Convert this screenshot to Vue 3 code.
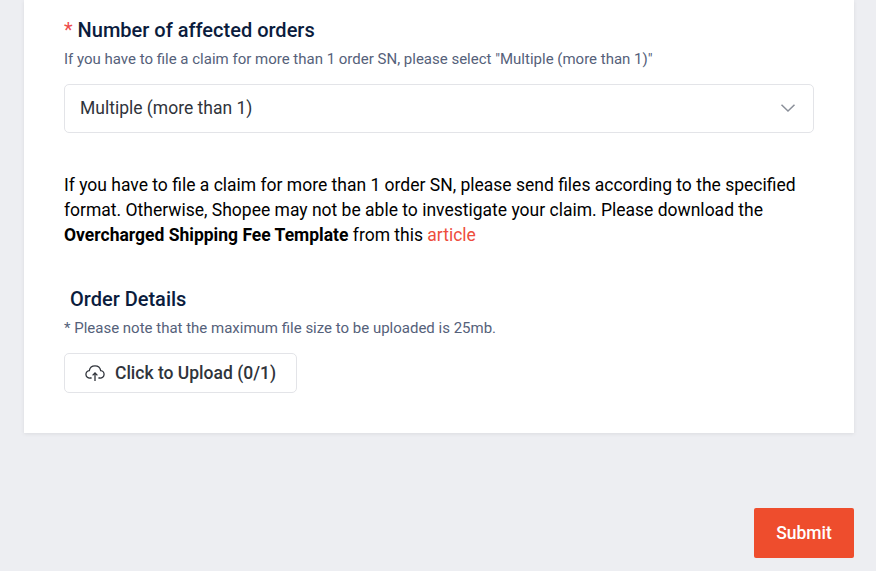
<template>
  <div class="page">
    <div class="card">
      <div class="field-title"><span class="required">*</span> Number of affected orders</div>
      <p class="hint">If you have to file a claim for more than 1 order SN, please select "Multiple (more than 1)"</p>
      <div class="select">
        <span>Multiple (more than 1)</span>
        <svg class="chevron" width="16" height="16" viewBox="0 0 16 16" fill="none">
          <path d="M1.5 4.8 8 11l6.5-6.2" stroke="#8a8f99" stroke-width="1.5" />
        </svg>
      </div>
      <p class="notice">
        If you have to file a claim for more than 1 order SN, please send files according to the specified format. Otherwise, Shopee may not be able to investigate your claim. Please download the
        <b>Overcharged Shipping Fee Template</b> from this <a class="link">article</a>
      </p>
      <div class="sub-title">Order Details</div>
      <p class="hint note">* Please note that the maximum file size to be uploaded is 25mb.</p>
      <button class="upload">
        <svg width="20" height="20" viewBox="0 0 20 20" fill="none" stroke="#30343b" stroke-width="1.3">
          <path d="M6.6 15H5A3.7 3.7 0 0 1 4.3 7.6 5.8 5.8 0 0 1 15.7 7.6 3.7 3.7 0 0 1 15 15H13.4" />
          <path d="M10 18V10M7.6 12.4 10 9.9l2.4 2.5" />
        </svg>
        <span>Click to Upload (0/1)</span>
      </button>
    </div>
    <div class="footer">
      <button class="submit">Submit</button>
    </div>
  </div>
</template>

<script setup>
</script>

<style>
html, body {
  margin: 0;
  background: #edeef2;
}
</style>

<style scoped>
.page {
  height: 571px;
  padding: 0 22px 0 24px;
  box-sizing: border-box;
  overflow: hidden;
  font-family: Roboto, "Liberation Sans", sans-serif;
}

.card {
  background: #fff;
  height: 433px;
  box-sizing: border-box;
  padding: 18px 40px 0;
  box-shadow: 0 1px 4px rgba(0, 0, 0, 0.08);
}

.field-title {
  font-size: 20px;
  line-height: 24px;
  font-weight: 500;
  color: #0b1c3d;
}

.required {
  color: #ee4d4d;
  font-weight: 400;
}

.hint {
  margin: 7px 0 0;
  font-size: 15px;
  line-height: 20px;
  color: #55617a;
}

.select {
  margin-top: 15px;
  height: 49px;
  box-sizing: border-box;
  border: 1px solid #e3e4e8;
  border-radius: 5px;
  padding: 0 17px 1px 15px;
  display: flex;
  align-items: center;
  justify-content: space-between;
  font-size: 17.5px;
  color: #30343b;
}

.notice {
  margin: 40px 0 0;
  font-size: 17.5px;
  line-height: 25px;
  color: #000;
}

.notice b {
  font-weight: 700;
}

.link {
  color: #ee4d3d;
}

.sub-title {
  margin: 39px 0 0 6px;
  font-size: 20px;
  line-height: 24px;
  font-weight: 500;
  color: #0b1c3d;
}

.note {
  margin-top: 7px;
}

.upload {
  margin-top: 15px;
  width: 233px;
  height: 40px;
  display: flex;
  align-items: center;
  justify-content: center;
  gap: 10px;
  background: #fff;
  border: 1px solid #e3e4e8;
  border-radius: 5px;
  font-family: inherit;
  font-size: 17.5px;
  font-weight: 500;
  color: #30343b;
}

.footer {
  display: flex;
  justify-content: flex-end;
  margin-top: 75px;
}

.submit {
  width: 100px;
  height: 50px;
  background: #ee4d2d;
  color: #fff;
  border: none;
  border-radius: 2px;
  font-family: inherit;
  font-size: 17.5px;
  font-weight: 500;
}
</style>
